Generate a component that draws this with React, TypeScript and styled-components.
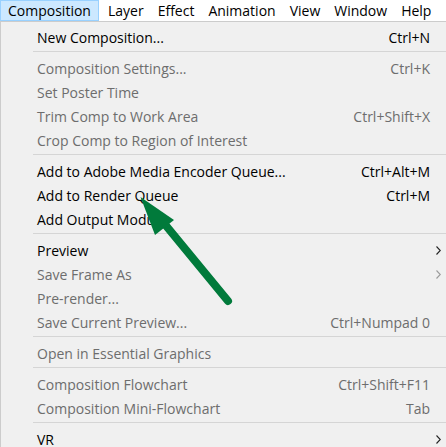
import React from "react";
import styled, { createGlobalStyle } from "styled-components";

const GlobalStyle = createGlobalStyle`
  html, body { margin: 0; padding: 0; background: #f0f0f0; }
  body { font-family: "Open Sans", "Noto Sans", sans-serif; }
  * { box-sizing: border-box; }
`;

const Page = styled.div`
  position: relative;
  width: 446px;
  height: 447px;
  overflow: hidden;
  font-size: 14px;
`;

const MenuBar = styled.div`
  display: flex;
  align-items: stretch;
  height: 21px;
  background: #ffffff;
`;

const MenuTitle = styled.div<{ $active?: boolean }>`
  display: flex;
  align-items: center;
  padding: ${(p) => (p.$active ? "0 7px 1px 7px" : "0 6px 1px 6px")};
  margin-right: ${(p) => (p.$active ? "2px" : "0")};
  color: #000;
  white-space: nowrap;
  background: ${(p) => (p.$active ? "#cce8ff" : "transparent")};
  border: 1px solid ${(p) => (p.$active ? "#99d1ff" : "transparent")};
`;

const Dropdown = styled.div`
  background: #f0f0f0;
  border-top: 1px solid #cccccc;
  border-left: 1px solid #cccccc;
  padding-top: 3px;
`;

const Item = styled.div<{ $disabled?: boolean }>`
  display: grid;
  grid-template-columns: 1fr auto 15px;
  align-items: center;
  height: 24px;
  padding-left: 36px;
  padding-right: 1px;
  color: ${(p) => (p.$disabled ? "#6d6d6d" : "#000000")};
  white-space: nowrap;
`;

const Shortcut = styled.span`
  text-align: right;
`;

const SubArrow = styled.span`
  display: flex;
  align-items: center;
  justify-content: flex-start;
  padding-left: 6px;
`;

const Separator = styled.div`
  height: 7px;
  margin-left: 32px;
  padding-top: 2px;
  &::after {
    content: "";
    display: block;
    height: 1px;
    background: #d5d5d5;
  }
`;

const Overlay = styled.svg`
  position: absolute;
  left: 0;
  top: 0;
  pointer-events: none;
`;

type Entry =
  | { sep: true }
  | { label: string; shortcut?: string; disabled?: boolean; sub?: boolean; sep?: false };

const entries: Entry[] = [
  { label: "New Composition...", shortcut: "Ctrl+N" },
  { sep: true },
  { label: "Composition Settings...", shortcut: "Ctrl+K", disabled: true },
  { label: "Set Poster Time", disabled: true },
  { label: "Trim Comp to Work Area", shortcut: "Ctrl+Shift+X", disabled: true },
  { label: "Crop Comp to Region of Interest", disabled: true },
  { sep: true },
  { label: "Add to Adobe Media Encoder Queue...", shortcut: "Ctrl+Alt+M" },
  { label: "Add to Render Queue", shortcut: "Ctrl+M" },
  { label: "Add Output Module" },
  { sep: true },
  { label: "Preview", sub: true },
  { label: "Save Frame As", sub: true, disabled: true },
  { label: "Pre-render...", disabled: true },
  { label: "Save Current Preview...", shortcut: "Ctrl+Numpad 0", disabled: true },
  { sep: true },
  { label: "Open in Essential Graphics", disabled: true },
  { sep: true },
  { label: "Composition Flowchart", shortcut: "Ctrl+Shift+F11", disabled: true },
  { label: "Composition Mini-Flowchart", shortcut: "Tab", disabled: true },
  { sep: true },
  { label: "VR", sub: true },
];

const Chevron: React.FC<{ color: string }> = ({ color }) => (
  <svg width="5" height="9" viewBox="0 0 5 9">
    <path d="M0.5 0.5 L4.3 4.5 L0.5 8.5" fill="none" stroke={color} strokeWidth="1.1" />
  </svg>
);

const titles = ["Composition", "Layer", "Effect", "Animation", "View", "Window", "Help"];

export default function App() {
  return (
    <Page>
      <GlobalStyle />
      <MenuBar>
        {titles.map((t, i) => (
          <MenuTitle key={t} $active={i === 0}>
            {t}
          </MenuTitle>
        ))}
      </MenuBar>
      <Dropdown>
        {entries.map((e, i) =>
          e.sep ? (
            <Separator key={i} />
          ) : (
            <Item key={i} $disabled={e.disabled}>
              <span>{e.label}</span>
              <Shortcut>{e.shortcut ?? ""}</Shortcut>
              <SubArrow>
                {e.sub ? <Chevron color={e.disabled ? "#9a9a9a" : "#222"} /> : null}
              </SubArrow>
            </Item>
          )
        )}
      </Dropdown>
      <Overlay width="446" height="447" viewBox="0 0 446 447">
        <line
          x1="228"
          y1="301"
          x2="163"
          y2="222"
          stroke="#017a3b"
          strokeWidth="8"
          strokeLinecap="round"
        />
        <polygon points="140.5,197 174,220 155,235" fill="#017a3b" />
      </Overlay>
    </Page>
  );
}
